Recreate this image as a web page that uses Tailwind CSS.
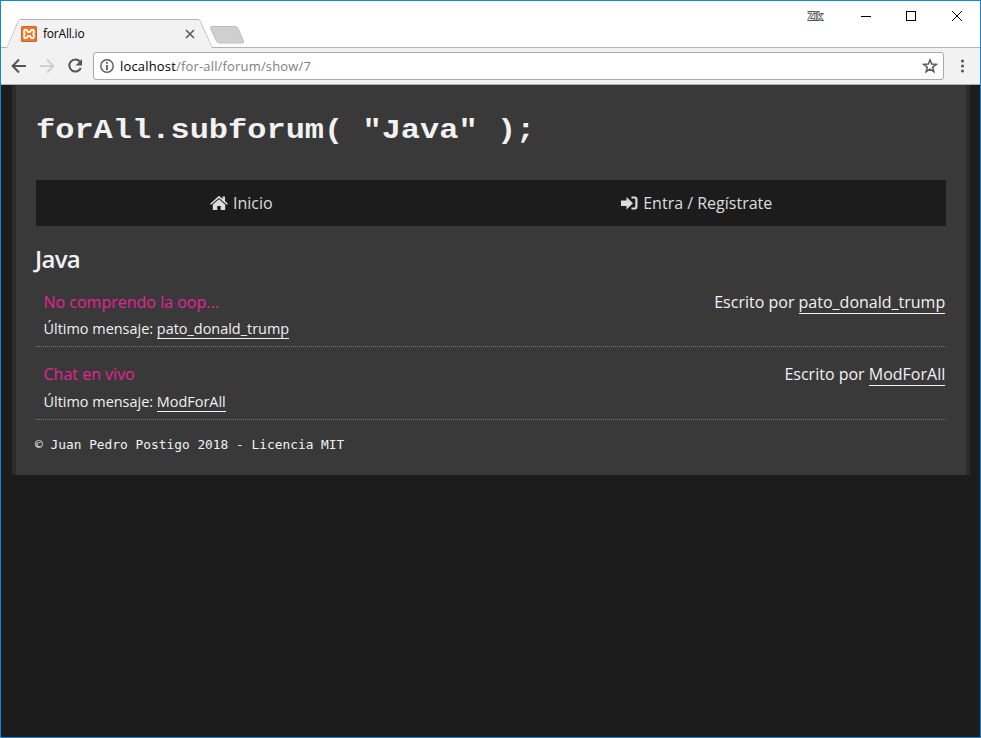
<!DOCTYPE html>
<html lang="es">
<head>
<meta charset="utf-8">
<title>forAll.io</title>
<script src="https://cdn.jsdelivr.net/npm/@tailwindcss/browser@4"></script>
</head>
<body class="bg-[#1c1c1c]">
<div class="flex h-[738px] w-[981px] flex-col overflow-hidden border border-[#1883d7] bg-[#1c1c1c] font-['Open_Sans',sans-serif] whitespace-nowrap">
  <!-- Title bar -->
  <header class="relative flex h-[46px] shrink-0 justify-between bg-white">
    <svg class="absolute left-0 top-0" width="979" height="47" viewBox="1 1 979 47">
      <path d="M1 47.5H6.500Q7.500 47 8 45.500L18.500 21Q19.200 19.500 20.500 19.500H198Q199.500 19.500 200 21L211 45.500Q212 47.500 213 47.500H980V48H1z" fill="none" stroke="#b2b2b2"/>
      <path d="M7 48L19 20.500Q19.500 20 20.500 20H198Q199 20 199.500 21L212 48z" fill="#f2f2f2"/>
      <path d="M212 26.500H235Q237 26.500 238 28.500L243.500 41Q244 43 242 43H219.500Q217.500 43 216.500 41L210.500 28.500Q210 26.500 212 26.500z" fill="#cfcfcf" stroke="#bdbdbd"/>
    </svg>
    <div class="relative mt-[24px] ml-[20px] flex h-[18px] w-[175px] items-center">
      <svg width="16" height="16" viewBox="0 0 16 16">
        <rect width="16" height="16" rx="1.500" fill="#d3661f"/>
        <rect x="1" y="1" width="14" height="14" rx="1" fill="#f37623"/>
        <path d="M3.700 7.900C2.600 6.200 2.800 3.700 4.800 3.700C6.300 3.700 6.400 5.600 7 6H9C9.600 5.600 9.700 3.700 11.200 3.700C13.200 3.700 13.400 6.200 12.300 7.900C13.400 9.700 13.200 12.300 11.200 12.300C9.700 12.300 9.600 10.300 9 10H7C6.400 10.300 6.300 12.300 4.800 12.300C2.800 12.300 2.600 9.700 3.700 7.900z" fill="none" stroke="#fff" stroke-width="1.900"/>
      </svg>
      <span class="ml-[6px] text-[12px] leading-[18px] tracking-[-0.200px] text-black">forAll.io</span>
      <svg class="mr-[1.500px] ml-auto" width="10" height="10" viewBox="0 0 10 10"><path d="M1 1L9 9M9 1L1 9" stroke="#5a5a5a" stroke-width="1.600"/></svg>
    </div>
    <div class="relative flex h-[30px] items-center pr-[17px]">
      <svg class="mr-[33px]" width="24" height="16" viewBox="0 0 24 16"><text x="4" y="12" textLength="14.500" lengthAdjust="spacingAndGlyphs" font-family="Open Sans" font-size="11" fill="#fff" stroke="#555" stroke-width="1.800" paint-order="stroke">Zik</text></svg>
      <svg width="102" height="12" viewBox="0 0 102 12" fill="none" stroke="#000">
        <path d="M0 6.500H10"/><rect x="45.500" y="1.500" width="9" height="9"/><path d="M91 1L101 11M101 1L91 11"/>
      </svg>
    </div>
  </header>
  <!-- Toolbar -->
  <div class="flex h-[38px] shrink-0 items-center border-b border-[#b1b1b1] bg-[#f2f2f2] pl-[10px]">
    <svg width="74" height="18" viewBox="0 0 74 18" fill="none" stroke-width="2">
      <path d="M15 9H2M8 2.500L1.600 9L8 15.500" stroke="#555"/>
      <path d="M29 9H42M36 2.500L42.400 9L36 15.500" stroke="#d0d0d0"/>
      <path d="M68.800 4.500A6 6 0 1 0 69.800 11" stroke="#555"/><path d="M71 2V8.500H64.500z" fill="#555"/>
    </svg>
    <div class="ml-[8px] flex h-[28px] w-[851px] items-center rounded-[3px] border border-[#a9a9a9] bg-white pr-[5px] pl-[5px]">
      <svg width="16" height="16" viewBox="0 0 16 16"><circle cx="8" cy="8" r="6.200" fill="none" stroke="#5a5a5a" stroke-width="1.400"/><path d="M8 7V12M8 4V5.800" stroke="#5a5a5a" stroke-width="1.800"/></svg>
      <span class="ml-[5px] text-[13px] leading-[20px] tracking-[0.170px] text-[#808080]"><span class="text-black">localhost</span>/for-all/forum/show/7</span>
      <svg class="ml-auto" width="16" height="16" viewBox="0 0 16 16"><path d="M8 1.900L9.700 6.100L14.200 6.400L10.700 9.300L11.900 13.700L8 11.200L4.100 13.700L5.300 9.300L1.800 6.400L6.300 6.100z" fill="none" stroke="#5a5a5a" stroke-width="1.500"/></svg>
    </div>
    <svg class="ml-[16px]" width="5" height="16" viewBox="0 0 5 16" fill="#5a5a5a"><circle cx="2.500" cy="3" r="1.600"/><circle cx="2.500" cy="8" r="1.600"/><circle cx="2.500" cy="13" r="1.600"/></svg>
  </div>
  <!-- Page -->
  <main class="mr-[10px] ml-[11px] h-[390px] border-x-4 border-[#2b2b2b] bg-[#393939] px-[20px] text-[#f2f2f2]">
    <h1 class="pt-[28px] font-['Courier_New','Liberation_Mono',monospace] text-[32px] leading-[36px] font-bold"><span class="block origin-center scale-y-[.88]">forAll.subforum( "Java" );</span></h1>
    <nav class="mt-[31px] flex h-[46px] bg-[#1c1c1c] text-[16px] text-[#dcdcdc]">
      <a class="flex flex-1 items-center justify-center gap-[5px] pr-[45px]">
        <svg width="18" height="16" viewBox="0 0 18 16" fill="#dcdcdc"><path d="M9 .8L12.500 3.900V1.500H15V6.100L17.900 8.700L16.900 9.800L9 2.900L1.100 9.800L.1 8.700z"/><path d="M9 4.200L15.200 9.600V15H10.700V11H7.300V15H2.800V9.600z"/></svg>
        <span>Inicio</span>
      </a>
      <a class="flex flex-1 items-center justify-center gap-[5px] pr-[44px]">
        <svg width="17" height="16" viewBox="0 0 17 16" fill="#dcdcdc"><path d="M0 5.500H5.500V2L12 8.200L5.500 14.400V11H0z"/><path d="M10.500 1.500H13.500Q16.500 1.500 16.500 4.500V11.500Q16.500 14.500 13.500 14.500H10.500V12.500H13.500Q14.300 12.500 14.300 11.700V4.300Q14.300 3.500 13.500 3.500H10.500z"/></svg>
        <span>Entra / Regístrate</span>
      </a>
    </nav>
    <h2 class="mt-[15px] mb-[1px] ml-[-1px] text-[24px] leading-[36px] font-semibold tracking-[-0.700px]">Java</h2>
    <section class="flex h-[69px] justify-between border-b border-dotted border-[#777] pt-[12px]">
      <div class="pl-[7.500px]">
        <a class="block text-[16px] leading-[24px] text-[#e9219c]">No comprendo la oop...</a>
        <p class="mt-[4px] text-[14.450px] leading-[22px]">Último mensaje: <a class="border-b border-[#f2f2f2]">pato_donald_trump</a></p>
      </div>
      <p class="mr-[0.800px] text-[16px] leading-[24px]">Escrito por <a class="border-b border-[#f2f2f2]">pato_donald_trump</a></p>
    </section>
    <section class="flex h-[73px] justify-between border-b border-dotted border-[#777] pt-[15px]">
      <div class="pl-[7.500px]">
        <a class="block text-[16px] leading-[24px] text-[#e9219c]">Chat en vivo</a>
        <p class="mt-[5px] text-[14.450px] leading-[22px]">Último mensaje: <a class="border-b border-[#f2f2f2]">ModForAll</a></p>
      </div>
      <p class="mr-[0.800px] text-[16px] leading-[24px]">Escrito por <a class="border-b border-[#f2f2f2]">ModForAll</a></p>
    </section>
    <footer class="mt-[15px] ml-[-1px] font-['DejaVu_Sans_Mono',monospace] text-[12.850px] leading-[20px]">© Juan Pedro Postigo 2018 - Licencia MIT</footer>
  </main>
</div>
</body>
</html>
